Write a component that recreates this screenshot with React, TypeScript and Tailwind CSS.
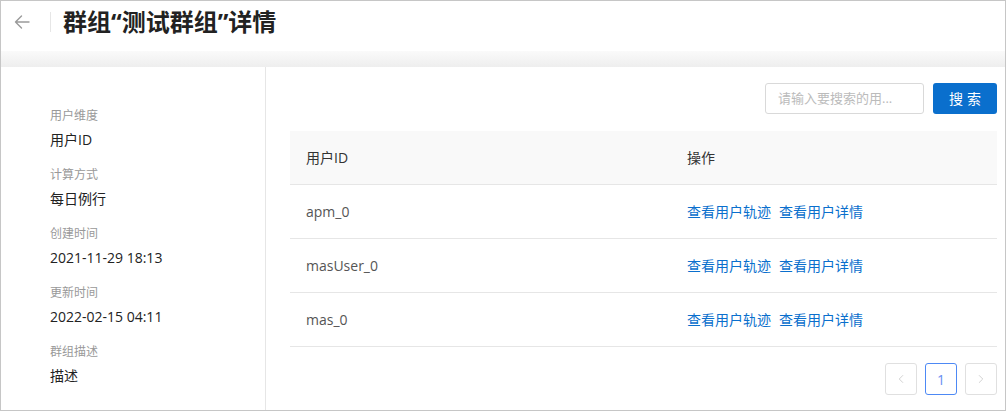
import { ChevronLeft, ChevronRight } from "lucide-react";

const font = {
  fontFamily: '"Open Sans", "Noto Sans CJK SC", sans-serif',
};

const meta = [
  { label: "用户维度", value: "用户ID" },
  { label: "计算方式", value: "每日例行" },
  { label: "创建时间", value: "2021-11-29 18:13" },
  { label: "更新时间", value: "2022-02-15 04:11" },
  { label: "群组描述", value: "描述" },
];

const users = ["apm_0", "masUser_0", "mas_0"];

const BackArrow = () => (
  <svg width="18" height="18" viewBox="0 0 18 18" fill="none">
    <path
      d="M16 9H2.5M8.5 3 2.5 9l6 6"
      stroke="#9a9a9a"
      strokeWidth="1.4"
      strokeLinecap="round"
      strokeLinejoin="round"
    />
  </svg>
);

export default function App() {
  return (
    <div
      style={font}
      className="flex h-[411px] w-[1006px] flex-col overflow-hidden border border-[#c6c6c6] bg-white"
    >
      {/* header */}
      <div className="flex h-[50px] shrink-0 items-center pb-[9px]">
        <div className="ml-[12px] flex w-[20px] items-center">
          <BackArrow />
        </div>
        <div className="ml-[17px] h-[20px] w-px bg-[#e6e6e6]" />
        <h1 className="ml-[12px] text-[24px] font-bold leading-none text-[#222]">
          群组“测试群组”详情
        </h1>
      </div>

      <div className="h-[16px] shrink-0 bg-gradient-to-b from-[#fafafa] to-[#eeeeee]" />

      <div className="flex flex-1 rounded-tl-[4px] bg-white">
        {/* left meta panel */}
        <div className="flex w-[265px] shrink-0 flex-col gap-[17px] border-r border-[#e6e6e6] pl-[49px] pt-[41px]">
          {meta.map(({ label, value }) => (
            <div key={label} className="flex flex-col gap-[6px]">
              <div className="text-[12px] leading-[16px] text-[#999]">
                {label}
              </div>
              <div className="text-[14px] leading-[20px] text-[#222]">
                {value}
              </div>
            </div>
          ))}
        </div>

        {/* right table panel */}
        <div className="flex flex-1 flex-col pl-[24px] pr-[8px] pt-[16px]">
          <div className="flex justify-end gap-[9px]">
            <div className="flex h-[31px] w-[159px] items-center rounded-[3px] border border-[#d9d9d9] px-[12px] text-[13px] text-[#bbb]">
              请输入要搜索的用...
            </div>
            <button className="h-[31px] w-[64px] rounded-[3px] bg-[#0a6fcd] text-[14px] tracking-[4px] pl-[4px] text-white">
              搜索
            </button>
          </div>

          <div className="mt-[17px] flex flex-col text-[14px]">
            <div className="flex h-[54px] items-center border-b border-[#e6e6e6] bg-[#f9f9f9] text-[#333]">
              <div className="w-[397px] pl-[16px]">用户ID</div>
              <div>操作</div>
            </div>
            {users.map((id) => (
              <div
                key={id}
                className="flex h-[54px] items-center border-b border-[#e6e6e6]"
              >
                <div className="w-[397px] pl-[16px] text-[#555]">{id}</div>
                <div className="flex gap-[8px] text-[#0a6fcd]">
                  <span>查看用户轨迹</span>
                  <span>查看用户详情</span>
                </div>
              </div>
            ))}
          </div>

          <div className="mt-[16px] flex justify-end gap-[8px]">
            <div className="flex h-[32px] w-[32px] items-center justify-center rounded-[3px] border border-[#e0e0e0] text-[#c4c4c4]">
              <ChevronLeft size={14} strokeWidth={1.3} />
            </div>
            <div className="flex h-[32px] w-[32px] items-center justify-center rounded-[3px] border border-[#4d89f5] text-[14px] text-[#6b8ef2]">
              1
            </div>
            <div className="flex h-[32px] w-[32px] items-center justify-center rounded-[3px] border border-[#e0e0e0] text-[#c4c4c4]">
              <ChevronRight size={14} strokeWidth={1.3} />
            </div>
          </div>
        </div>
      </div>
    </div>
  );
}
